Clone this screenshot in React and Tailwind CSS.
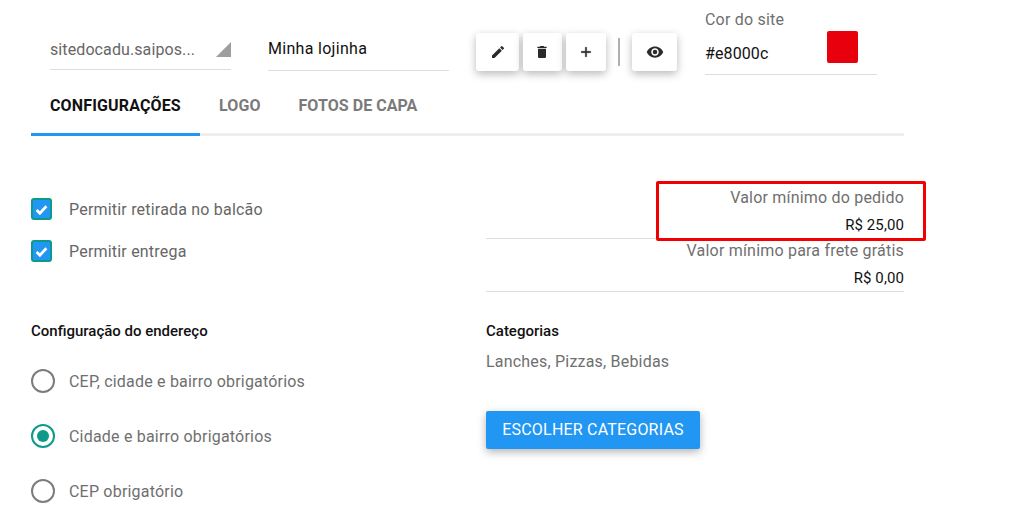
import React from "react";

const IconBtn = ({ w, children }) => (
  <button className={`${w} h-[38px] flex items-center justify-center bg-white rounded-[3px] shadow-[0_3px_8px_rgba(0,0,0,0.28)]`}>
    {children}
  </button>
);

const Icon = ({ d, size = 16, bold }) => (
  <svg width={size} height={size} viewBox="0 0 24 24" fill="#2b2b2b" stroke={bold ? "#2b2b2b" : "none"} strokeWidth={bold ? 0.7 : 0}><path d={d} /></svg>
);

const Check = ({ label }) => (
  <div className="flex items-center h-[24px]">
    <span className="w-[21px] h-[22px] rounded-[3px] bg-[#2196f3] border-2 border-[#0d9a8a] flex items-center justify-center">
      <svg width="13" height="13" viewBox="0 0 24 24" fill="none" stroke="#fff" strokeWidth="5"><path d="M3 13l6 6L21 6" /></svg>
    </span>
    <span className="ml-[17px] pt-[2px] text-[16px] tracking-[0.2px] text-[#666666]">{label}</span>
  </div>
);

const Radio = ({ label, on }) => (
  <div className="flex items-center h-[24px]">
    <span className={`w-[24px] h-[24px] rounded-full border-2 flex items-center justify-center ${on ? "border-[#0d9a8a]" : "border-[#7d7d7d]"}`}>
      {on && <span className="w-[12px] h-[12px] rounded-full bg-[#0d9a8a]" />}
    </span>
    <span className="ml-[14px] pt-[2px] text-[16px] tracking-[0.2px] text-[#6f6f6f]">{label}</span>
  </div>
);

export default function App() {
  return (
    <div className="w-[1016px] h-[523px] overflow-hidden bg-white font-['Roboto',sans-serif]">
      <div className="ml-[31px] w-[873px]">
        <div className="flex items-start pl-[19px] h-[75px]">
          <div className="w-[181px] h-[70px] pt-[40px] border-b border-[#dedede] flex justify-between relative">
            <span className="text-[16px] leading-[20px] text-[#666666] tracking-[0.1px]">sitedocadu.saipos...</span>
            <span className="w-0 h-0 mt-[2px] border-l-[15px] border-l-transparent border-b-[15px] border-b-[#9e9e9e]" />
          </div>
          <div className="ml-[37px] w-[181px] h-[71px] pt-[39px] border-b border-[#dedede] text-[16px] tracking-[0.3px] leading-[20px] text-[#111111]">
            Minha lojinha
          </div>
          <div className="ml-[27px] mt-[33px] flex items-center">
            <IconBtn w="w-[43px]"><Icon d="M3 17.25V21h3.75L17.81 9.94l-3.75-3.75L3 17.25zM20.71 7.04a1 1 0 0 0 0-1.41l-2.34-2.34a1 1 0 0 0-1.41 0l-1.83 1.83 3.75 3.75 1.83-1.83z" /></IconBtn>
            <div className="w-[4px]" />
            <IconBtn w="w-[39px] pr-px"><Icon d="M6 19c0 1.1.9 2 2 2h8c1.1 0 2-.9 2-2V7H6v12zM19 4h-3.5l-1-1h-5l-1 1H5v2h14V4z" /></IconBtn>
            <div className="w-[4px]" />
            <IconBtn w="w-[40px]"><Icon bold d="M19 13h-6v6h-2v-6H5v-2h6V5h2v6h6v2z" /></IconBtn>
            <div className="ml-[12px] w-[2px] h-[28px] bg-[#b0b0b0]" />
            <div className="w-[12px]" />
            <IconBtn w="w-[45px]"><Icon size={18} d="M12 4.5C7 4.5 2.73 7.61 1 12c1.73 4.39 6 7.5 11 7.5s9.27-3.11 11-7.5c-1.73-4.39-6-7.5-11-7.5zM12 17c-2.76 0-5-2.24-5-5s2.24-5 5-5 5 2.24 5 5-2.24 5-5 5zm0-8a3 3 0 1 0 0 6 3 3 0 0 0 0-6z" /></IconBtn>
          </div>
          <div className="ml-[28px] w-[172px] h-[75px] mt-0 border-b border-[#dedede] relative">
            <div className="pt-[10px] text-[16px] tracking-[0.2px] leading-[20px] text-[#6f6f6f]">Cor do site</div>
            <div className="flex items-start justify-between pr-[19px]">
              <span className="mt-[14px] text-[16px] tracking-[0.1px] leading-[20px] text-[#111111]">#e8000c</span>
              <span className="w-[31px] h-[32px] mt-[1px] rounded-[2px] bg-[#e8000c]" />
            </div>
          </div>
        </div>

        <div className="flex h-[61px] border-b-[3px] border-[#eeeeee]">
          <div className="w-[169px] h-[61px] pl-[19px] pt-[21px] border-b-[3px] border-[#2196f3] text-[16px] tracking-[0.15px] leading-[20px] font-bold text-[#111111]">CONFIGURAÇÕES</div>
          <div className="ml-[19px] pt-[21px] text-[16px] tracking-[0.1px] leading-[20px] font-bold text-[#7a7a7a]">LOGO</div>
          <div className="ml-[38px] pt-[21px] text-[16px] tracking-[0.05px] leading-[20px] font-bold text-[#7a7a7a]">FOTOS DE CAPA</div>
        </div>

        <div className="flex">
          <div className="w-[455px]">
            <div className="pt-[61px] flex flex-col gap-[18px]">
              <Check label="Permitir retirada no balcão" />
              <Check label="Permitir entrega" />
            </div>
            <div className="mt-[58px] text-[15px] leading-[20px] font-medium text-[#111111]">Configuração do endereço</div>
            <div className="mt-[28px] flex flex-col gap-[31px]">
              <Radio label="CEP, cidade e bairro obrigatórios" />
              <Radio on label="Cidade e bairro obrigatórios" />
              <Radio label="CEP obrigatório" />
            </div>
          </div>

          <div className="w-[418px]">
            <div className="pt-[50px] relative">
              <div className="h-[53px] border-b border-[#dedede] text-right">
                <div className="text-[16px] tracking-[0.2px] leading-[24px] text-[#6f6f6f]">Valor mínimo do pedido</div>
                <div className="mt-[3px] text-[15px] tracking-[0.1px] leading-[24px] text-[#111111]">R$ 25,00</div>
              </div>
              <div className="h-[53px] border-b border-[#dedede] text-right">
                <div className="pt-px text-[16px] tracking-[0.2px] leading-[22px] text-[#6f6f6f]">Valor mínimo para frete grátis</div>
                <div className="mt-[4px] text-[15px] tracking-[0.1px] leading-[24px] text-[#111111]">R$ 0,00</div>
              </div>
              <div className="absolute left-[170px] top-[45px] w-[270px] h-[60px] border-[3px] border-[#f00000] rounded-[2px]" />
            </div>
            <div className="mt-[29px] text-[15px] leading-[20px] font-medium text-[#111111]">Categorias</div>
            <div className="mt-[11px] text-[16px] tracking-[0.2px] leading-[20px] text-[#6f6f6f]">Lanches, Pizzas, Bebidas</div>
            <button className="mt-[39px] w-[214px] h-[38px] rounded-[2px] bg-[#2196f3] text-white text-[16px] tracking-[0.2px] shadow-[0_3px_8px_rgba(0,0,0,0.3)]">ESCOLHER CATEGORIAS</button>
          </div>
        </div>
      </div>
    </div>
  );
}
